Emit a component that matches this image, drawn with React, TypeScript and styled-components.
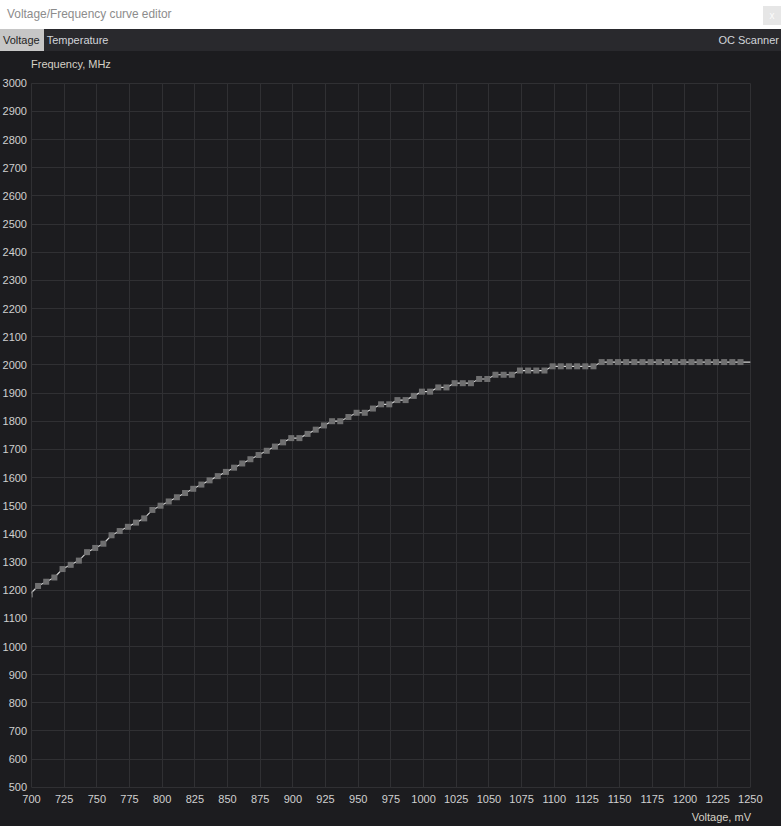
import React from "react";
import styled, { createGlobalStyle } from "styled-components";

const GlobalStyle = createGlobalStyle`
  html, body { margin: 0; padding: 0; background: #1c1c1f; }
  body { font-family: "Liberation Sans", Arial, sans-serif; }
`;

const Window = styled.div`
  display: flex;
  flex-direction: column;
  width: 781px;
  height: 826px;
  background: #1c1c1f;
  overflow: hidden;
`;

const TitleBar = styled.div`
  height: 29px;
  flex: none;
  background: #ffffff;
  display: flex;
  align-items: flex-start;
  justify-content: space-between;
`;

const Title = styled.span`
  font-family: "Liberation Sans", Arial, sans-serif;
  font-size: 11.9px;
  color: #8c8c8c;
  padding: 7px 0 0 7px;
  line-height: 14px;
`;

const CloseButton = styled.div`
  width: 18px;
  height: 19px;
  margin-top: 6px;
  background: #e6e6e6;
  color: #fbfbfb;
  font-size: 10px;
  display: flex;
  align-items: center;
  justify-content: center;
`;

const TabBar = styled.div`
  height: 22px;
  flex: none;
  background: #29292d;
  display: flex;
  align-items: stretch;
`;

const Tab = styled.div<{ $active?: boolean }>`
  display: flex;
  align-items: center;
  padding: 0 4px 0 3px;
  font-size: 11px;
  color: ${(p) => (p.$active ? "#1e1e1e" : "#d2d5da")};
  background: ${(p) => (p.$active ? "#c6c6c6" : "transparent")};
`;

const TabSpacer = styled.div`
  flex: 1;
`;

const RightTab = styled(Tab)`
  padding: 0 2px 0 4px;
`;

const ChartArea = styled.div`
  flex: 1;
  position: relative;
  background: #1c1c1f;
`;

const ChartSvg = styled.svg`
  display: block;
  font-family: "Liberation Sans", Arial, sans-serif;
  font-size: 11px;
`;

const Label = styled.text`
  fill: #d0d0d0;
`;

const AxisTitle = styled.text`
  fill: #d6d1c6;
`;

const W = 781;
const H = 775;
const PX0 = 31.5;
const PX1 = 750.3;
const PY0 = 32.3; // 3000 MHz
const PY1 = 736.3; // 500 MHz
const MV0 = 700;
const MV1 = 1250;
const F0 = 500;
const F1 = 3000;

const xOf = (mv: number) => PX0 + ((mv - MV0) / (MV1 - MV0)) * (PX1 - PX0);
const yOf = (f: number) => PY1 - ((f - F0) / (F1 - F0)) * (PY1 - PY0);

const rep = (v: number, n: number) => Array.from({ length: n }, () => v);

const FREQS: number[] = [
  1185, 1215, 1230, 1245, 1275, 1290, 1305, 1335, 1350, 1365, 1395, 1410,
  1425, 1440, 1455, 1485, 1500, 1515, 1530, 1545, 1560, 1575, 1590, 1605,
  1620, 1635, 1650, 1665, 1680, 1695, 1710, 1725, 1740, 1740, 1755, 1770,
  1785, 1800, 1800, 1815, 1830, 1830, 1845, 1860, 1860, 1875, 1875, 1890,
  1905, 1905, 1920, 1920, 1935, 1935, 1935, 1950, 1950, 1965, 1965, 1965,
  ...rep(1980, 4),
  ...rep(1995, 6),
  ...rep(2010, 18),
];

const POINTS = FREQS.map((f, i) => ({ mv: 698.75 + 6.25 * i, f }));

const xTicks = Array.from({ length: 23 }, (_, i) => MV0 + i * 25);
const yTicks = Array.from({ length: 26 }, (_, i) => F0 + i * 100);

const crisp = (v: number) => Math.round(v) + 0.5;

function CurveChart() {
  const linePts = [
    ...POINTS.map((p) => `${xOf(p.mv).toFixed(2)},${yOf(p.f).toFixed(2)}`),
    `${xOf(1250).toFixed(2)},${yOf(2010).toFixed(2)}`,
  ].join(" ");

  return (
    <ChartSvg width={W} height={H} viewBox={`0 0 ${W} ${H}`}>
      <defs>
        <clipPath id="plotClip">
          <rect x={PX0} y={PY0 - 4} width={PX1 - PX0 + 1} height={PY1 - PY0 + 4} />
        </clipPath>
      </defs>

      <AxisTitle x={31} y={17}>
        Frequency, MHz
      </AxisTitle>

      {yTicks.map((f) => (
        <line
          key={`h${f}`}
          x1={PX0}
          x2={PX1}
          y1={crisp(yOf(f) - 0.5)}
          y2={crisp(yOf(f) - 0.5)}
          stroke="#303033"
          strokeWidth={1}
        />
      ))}
      {xTicks.map((mv) => (
        <line
          key={`v${mv}`}
          x1={crisp(xOf(mv) - 0.5)}
          x2={crisp(xOf(mv) - 0.5)}
          y1={PY0}
          y2={PY1}
          stroke="#303033"
          strokeWidth={1}
        />
      ))}

      {yTicks.map((f) => (
        <Label key={`yl${f}`} x={27} y={yOf(f) + 4} textAnchor="end">
          {f}
        </Label>
      ))}
      {xTicks.map((mv) => (
        <Label key={`xl${mv}`} x={xOf(mv)} y={752} textAnchor="middle">
          {mv}
        </Label>
      ))}

      <AxisTitle x={751} y={770} textAnchor="end">
        Voltage, mV
      </AxisTitle>

      <g clipPath="url(#plotClip)">
        <polyline points={linePts} fill="none" stroke="#d4d4d4" strokeWidth={1.2} />
        {POINTS.map((p, i) => (
          <rect
            key={i}
            x={xOf(p.mv) - 3}
            y={yOf(p.f) - 3}
            width={6}
            height={6}
            fill="#6f6f70"
          />
        ))}
      </g>
    </ChartSvg>
  );
}

export default function App() {
  return (
    <>
      <GlobalStyle />
      <Window>
        <TitleBar>
          <Title>Voltage/Frequency curve editor</Title>
          <CloseButton>x</CloseButton>
        </TitleBar>
        <TabBar>
          <Tab $active>Voltage</Tab>
          <Tab>Temperature</Tab>
          <TabSpacer />
          <RightTab>OC Scanner</RightTab>
        </TabBar>
        <ChartArea>
          <CurveChart />
        </ChartArea>
      </Window>
    </>
  );
}
